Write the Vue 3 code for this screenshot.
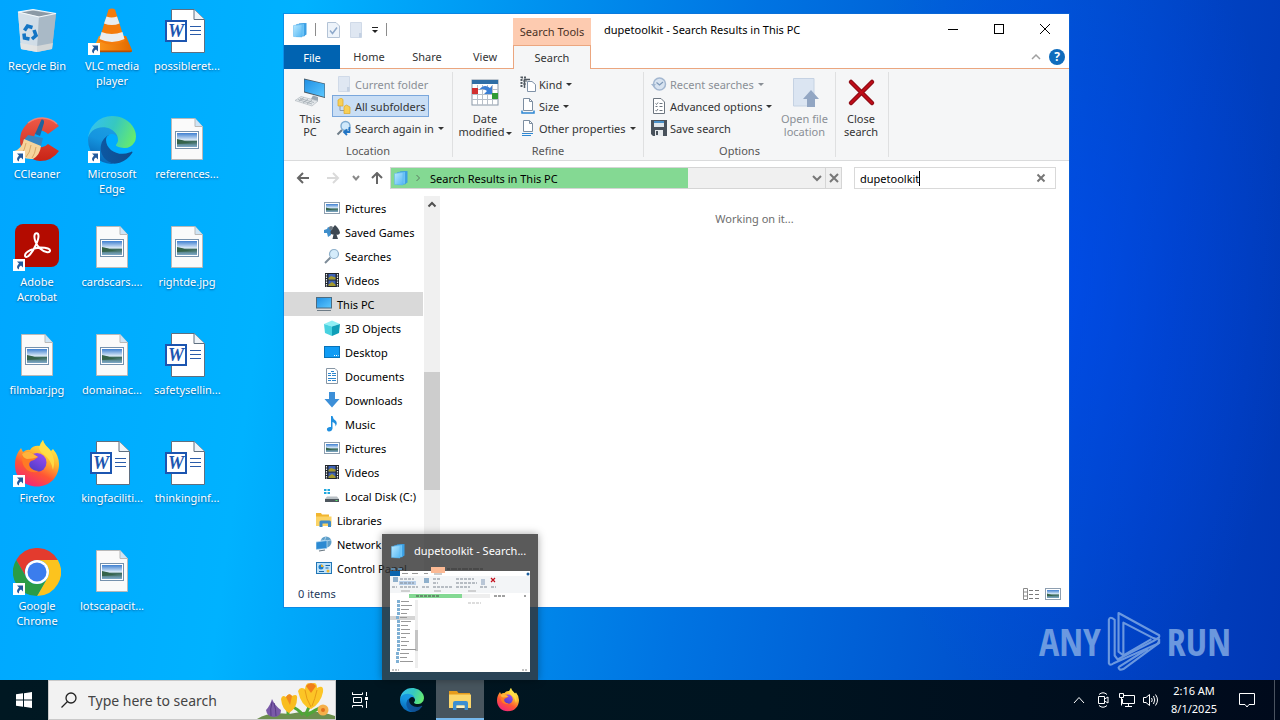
<template>
  <div class="screen">
    <!-- Icon sprite -->
    <svg class="sprite" aria-hidden="true">
      <defs>
        <linearGradient id="g-sky" x1="0" y1="0" x2="0" y2="1">
          <stop offset="0" stop-color="#3f7fd0" />
          <stop offset="0.5" stop-color="#dcebf8" />
          <stop offset="0.6" stop-color="#3d6b5c" />
          <stop offset="1" stop-color="#7fa9c9" />
        </linearGradient>
        <linearGradient id="g-screen" x1="0" y1="0" x2="1" y2="1">
          <stop offset="0" stop-color="#1f8fe4" />
          <stop offset="1" stop-color="#5cc8ff" />
        </linearGradient>
        <linearGradient id="g-bin" x1="0" y1="0" x2="1" y2="0">
          <stop offset="0" stop-color="#dfe6ec" />
          <stop offset="1" stop-color="#9aaab8" />
        </linearGradient>
        <linearGradient id="g-cone" x1="0" y1="0" x2="1" y2="0">
          <stop offset="0" stop-color="#ff9a1e" />
          <stop offset="1" stop-color="#e26a00" />
        </linearGradient>
        <linearGradient id="g-edge-dark" x1="0" y1="0.5" x2="1" y2="0.5">
          <stop offset="0" stop-color="#0c59a4" />
          <stop offset="1" stop-color="#114a8b" />
        </linearGradient>
        <linearGradient id="g-edge-mid" x1="0.6" y1="0" x2="0.3" y2="1">
          <stop offset="0" stop-color="#1b9de2" />
          <stop offset="0.4" stop-color="#1595df" />
          <stop offset="1" stop-color="#0660b0" />
        </linearGradient>
        <linearGradient id="g-edge-top" x1="0" y1="0.3" x2="1" y2="0.6">
          <stop offset="0" stop-color="#35c1f1" />
          <stop offset="0.5" stop-color="#36c8c0" />
          <stop offset="1" stop-color="#66eb6e" />
        </linearGradient>
        <linearGradient id="g-fox" x1="0.8" y1="0.05" x2="0.3" y2="1">
          <stop offset="0" stop-color="#fff44f" />
          <stop offset="0.35" stop-color="#ffb52e" />
          <stop offset="0.65" stop-color="#ff5634" />
          <stop offset="1" stop-color="#f1257c" />
        </linearGradient>
        <linearGradient id="g-globe" x1="0.8" y1="0" x2="0.2" y2="1">
          <stop offset="0" stop-color="#9a4cf2" />
          <stop offset="1" stop-color="#4a3cc4" />
        </linearGradient>
        <linearGradient id="g-cc" x1="0" y1="0" x2="0" y2="1">
          <stop offset="0" stop-color="#ee5a48" />
          <stop offset="1" stop-color="#c92416" />
        </linearGradient>
        <linearGradient id="g-stack" x1="0" y1="0" x2="1" y2="1">
          <stop offset="0" stop-color="#b9e8ff" />
          <stop offset="1" stop-color="#55b8f4" />
        </linearGradient>
      </defs>

      <symbol id="recycle" viewBox="0 0 48 48">
        <path d="M5 4 20 1.500 43 5.500 39 41 24 44 8 41z" fill="url(#g-bin)" />
        <path d="M5 4 26 9 24 44 8 41z" fill="#d3dfe9" opacity="0.9" />
        <path d="M26 9 43 5.500 39 41 24 44z" fill="#a9b9c6" />
        <path d="M8 4.500 20 2.500 40 6 26 8.500z" fill="#8b99a5" />
        <path d="M5 4 20 1.500 43 5.500 26 9z" fill="none" stroke="#f4f8fb" stroke-width="1.200" />
        <path d="M7 35 24 38 40 35 39 41 24 44 8 41z" fill="#efe9e2" opacity="0.6" />
        <g fill="none" stroke="#1475c4" stroke-width="3.600">
          <path d="M11.500 22.500 14.500 18 19.500 19.500" />
          <path d="M21 22 23 27.500 19 31" />
          <path d="M16.500 31 11.500 30 11 25.500" />
        </g>
      </symbol>

      <symbol id="vlc" viewBox="0 0 48 48">
        <path d="M11 28h27l6 14q.5 2-1.500 2H6.500q-2 0-1.500-2z" fill="url(#g-cone)" />
        <path d="M5 42.500h39q0 1.800-1.500 1.800H6.500Q5 44.300 5 42.500z" fill="#b95000" />
        <path d="M20.500 1.500q3.500-2 6.500 0L37 33q-12.500 7-26 0z" fill="#f47c0c" />
        <path d="M18.500 8.500q5 2 10.500 0l2.500 7q-7.500 3-15.500 0z" fill="#e9edf0" />
        <path d="M13.500 24q10 4 21 0l2 7q-12.500 6-25 0z" fill="#e9edf0" />
      </symbol>

      <symbol id="ccleaner" viewBox="0 0 48 48">
        <path d="M46 10A21 21 0 0 0 13 9A22 22 0 0 0 12 38Q20 45 27 45Q39 45 46 35L35 28Q30 33 25 30Q19 25 22 18Q27 11 35 18z" fill="url(#g-cc)" />
        <path d="M44 8A22 22 0 0 0 15 7" fill="none" stroke="#ff9a8a" stroke-width="1.500" opacity="0.6" />
        <path d="M28.500 3.500Q31.500 3 31 7L27 20 22 18z" fill="#21639c" />
        <path d="M15 19 30 22 28 30 10 25z" fill="#3886c0" />
        <path d="M11 23 28 30Q27 39 20 43Q9 44 1 35Q9 33 11 23z" fill="#f6d59c" />
        <path d="M13 27Q12 34 8 38M18 29Q17 37 13 41M23 31Q22 38 19 42" fill="none" stroke="#d9a866" stroke-width="1" />
      </symbol>

      <symbol id="edge" viewBox="0 0 256 256">
        <path fill="url(#g-edge-dark)" d="M231 190.500c-3.400 1.800-6.900 3.400-10.500 4.700a101.900 101.900 0 0 1-35.900 6.500c-47.300 0-88.500-32.500-88.500-74.300a31.500 31.500 0 0 1 16.400-27.300c-42.800 1.800-53.800 46.400-53.800 72.500 0 74 68.100 81.400 82.800 81.400 7.900 0 19.800-2.300 27-4.600l1.300-.4a128.300 128.300 0 0 0 66.600-52.800 4 4 0 0 0-5.400-5.700z" />
        <path fill="url(#g-edge-mid)" d="M105.700 241.400a79.200 79.200 0 0 1-22.700-21.300 80.700 80.700 0 0 1 29.500-120c3.200-1.500 8.500-4.100 15.600-4a32.400 32.400 0 0 1 25.700 13 31.900 31.900 0 0 1 6.300 18.700c0-.2 24.500-79.600-80-79.600-43.900 0-80 41.600-80 78.200a130.200 130.200 0 0 0 12.100 56 128 128 0 0 0 156.400 67 75.500 75.500 0 0 1-62.800-8z" />
        <path fill="url(#g-edge-top)" d="M152.300 148.900c-.9 1-3.400 2.500-3.400 5.600 0 2.600 1.700 5.200 4.800 7.300 14.300 10 41.400 8.600 41.500 8.600a59.600 59.600 0 0 0 30.300-8.300 61.400 61.400 0 0 0 30.400-52.900c.3-22.400-8-37.300-11.300-43.900C223.500 23.900 177.700 0 128 0A128 128 0 0 0 0 126.200c.5-36.500 36.800-66 80-66 3.500 0 23.500.3 42 10 16.300 8.600 24.900 19 30.800 29.200 6.200 10.700 7.300 24.100 7.300 29.500 0 5.300-2.700 13.300-7.800 19.900z" />
      </symbol>

      <symbol id="acrobat" viewBox="0 0 48 48">
        <rect x="2" y="0" width="44" height="43" rx="8" fill="#b30b00" />
        <path d="M12 31.500C12 28 21 23.500 27.500 23.500C34 23.500 37.500 25 37 27C36.500 29 31.500 28.500 27 24.500C23 21 21 14.500 21.500 11.500C22 8.500 25.500 8.500 25.500 12C25.500 16.500 21 26 17 30.500C14 34 12 33.500 12 31.500z" fill="none" stroke="#fff" stroke-width="2" />
      </symbol>

      <symbol id="firefox" viewBox="0 0 48 48">
        <path d="M30 0C31 5 35 7 38 11L40 9Q46 16 46 24C46 37 37 46.500 24 46.500C11 46.500 2 37 2 25C2 18 4 13 8 8L10 12Q14 9 17 10Q20 5 27 6Q28 3 30 0z" fill="url(#g-fox)" />
        <path d="M30 0C31 5 35 7 38 12Q43 20 40 30Q38 19 30 14Q26 11 26 7Q27 3 30 0z" fill="#ffe14a" opacity="0.8" />
        <circle cx="24" cy="22.500" r="9.500" fill="url(#g-globe)" />
        <path d="M9 14Q13 11 17 12L25 17Q22 20 18 21Q15 23 17 27Q20 31 26 31Q21 34 14 30Q8 25 9 14z" fill="#ff7a25" />
        <path d="M9 14Q13 11 17 12L25 17Q20 19 14 19Q10 18 9 14z" fill="#ffb43c" />
      </symbol>

      <symbol id="chrome" viewBox="0 0 48 48">
        <path d="M24 12h20.800A24 24 0 0 0 3.200 12L13.600 30A12 12 0 0 1 24 12z" fill="#e33b2e" />
        <path d="M34.400 30 24 48A24 24 0 0 0 44.800 12H24A12 12 0 0 1 34.400 30z" fill="#fcc31e" />
        <path d="M13.600 30 3.200 12A24 24 0 0 0 24 48L34.400 30A12 12 0 0 1 13.600 30z" fill="#2a9c46" />
        <circle cx="24" cy="24" r="12" fill="#fff" />
        <circle cx="24" cy="24" r="9.500" fill="#3b7ded" />
      </symbol>

      <symbol id="word" viewBox="0 0 48 48">
        <path d="M8.500 1.500H31L41.500 11.500V44.500H8.500z" fill="#fff" stroke="#5f6f80" />
        <path d="M31 1.500V11.500H41.500" fill="#eef3f8" stroke="#5f6f80" />
        <path d="M27 18.500h11M27 22.500h11M27 26.500h11" stroke="#2a5caa" stroke-width="1" />
        <rect x="3" y="13" width="20" height="20" fill="#fff" stroke="#1c55b0" stroke-width="2" />
      </symbol>

      <symbol id="photo" viewBox="0 0 48 48">
        <path d="M8.500 2.500H32L39.500 10.500V43.500H8.500z" fill="#fafafa" stroke="#b9b9b9" />
        <path d="M32 2.500V10.500H39.500" fill="#cfe4f5" stroke="#b9b9b9" />
        <rect x="12.500" y="15.500" width="23" height="17" fill="#fff" stroke="#7591ad" />
        <rect x="14" y="17" width="20" height="14" fill="url(#g-sky)" />
        <path d="M14 23q6 1 10 3 5 1 10 1l-20 1z" fill="#35634a" />
      </symbol>

      <symbol id="shortcut" viewBox="0 0 12 12">
        <rect width="12" height="12" fill="#fff" />
        <path d="M4 2.500h6v6L8 6.500Q5.500 7.500 6 10.500Q2 8.500 6 4.500z" fill="#235a9c" />
      </symbol>

      <symbol id="stack" viewBox="0 0 16 16">
        <path d="M7 1.500 14.500 1V12.500L12 14H7z" fill="#3b9fe4" />
        <path d="M4.500 2.500 12.500 1.500V14L4.500 14.500z" fill="#6cc3f7" stroke="#2f93d8" stroke-width="0.500" />
        <path d="M1.500 3.500 10 2.500V15L1.500 14.500z" fill="url(#g-stack)" stroke="#58b4ee" stroke-width="0.500" />
      </symbol>

      <symbol id="qa-check" viewBox="0 0 16 16">
        <path d="M2.500 .5H11L14.500 4V15.500H2.500z" fill="#edf3fa" stroke="#b3c3d6" />
        <path d="M5 8.500 7.500 11.500 12 5.500" fill="none" stroke="#8ea9cb" stroke-width="1.500" />
      </symbol>
      <symbol id="page-off" viewBox="0 0 16 16">
        <path d="M2.500 .5H13.500V15.500H2.500z" fill="#dfe7f2" stroke="#d0dae8" />
        <path d="M11 11v4.500h2.500V11z" fill="#c3d0e2" />
      </symbol>

      <symbol id="pc-large" viewBox="0 0 32 32">
        <path d="M10 1.500 31 6.500V21L10 15.500z" fill="#4b5862" />
        <path d="M10.500 2.500 30.500 7V20L10.500 14.500z" fill="url(#g-screen)" />
        <path d="M19 18.500 24 20V24L17 22z" fill="#9ba8b3" />
        <path d="M7 19.500 24 24 18 29 1 23.500z" fill="#e3e7ea" stroke="#aab2b9" stroke-width="0.600" />
        <path d="M6 21.500 20 25.500M4 22.500 18 27M10 20.500 5 24M14 22 9 26M18 23 13 27" stroke="#9aa3ab" stroke-width="0.700" />
      </symbol>
      <symbol id="subfolders" viewBox="0 0 16 16">
        <path d="M2 2 5 0 7 1.500V8H2z" fill="#f7cf57" stroke="#dca827" stroke-width="0.700" />
        <path d="M4 8v4.500H8" fill="none" stroke="#8e9aa8" />
        <path d="M8 8.500 10.500 7 14 9V15.500H8z" fill="#f7cf57" stroke="#dca827" stroke-width="0.700" />
      </symbol>
      <symbol id="search-again" viewBox="0 0 16 16">
        <circle cx="9.500" cy="6" r="4.500" fill="#cfe9fb" stroke="#7ba9cf" stroke-width="1.400" />
        <path d="M6 10 1.500 14.500" stroke="#6e7c88" stroke-width="2" />
        <path d="M13.500 7v5H8.500M11 9.500 8 12 11 15" fill="none" stroke="#2275c4" stroke-width="1.800" />
      </symbol>
      <symbol id="calendar" viewBox="0 0 32 32">
        <rect x="3" y="3" width="26" height="25" fill="#fff" stroke="#8a98a8" />
        <rect x="3" y="3" width="26" height="4" fill="#2f6ea5" />
        <path d="M8.500 8v20M13.500 8v20M18.500 8v20M23.500 8v20M3 12.500h26M3 17.500h26M3 22.500h26" stroke="#b7bfc8" stroke-width="1" />
        <rect x="3" y="11" width="6" height="6" fill="#d12f2f" />
        <rect x="23" y="16" width="6" height="6" fill="#2f9b35" />
        <path d="M10 13Q15 6 21 11L23 8.500V17H15L18 14Q14 10.500 10 13z" fill="#3b7fd4" />
      </symbol>
      <symbol id="kind" viewBox="0 0 16 16">
        <path d="M1.500 11V1.500H7" fill="none" stroke="#525a62" stroke-width="2" stroke-dasharray="2 1" />
        <path d="M4.500 12V3.500H10" fill="none" stroke="#525a62" stroke-width="1.500" />
        <path d="M7.500 5.500H12L15.500 8.500V15.500H7.500z" fill="#fff" stroke="#8092a8" />
        <path d="M3 5h4M3 8h3" stroke="#525a62" />
      </symbol>
      <symbol id="size" viewBox="0 0 16 16">
        <path d="M3.500 .5H9.500L12.500 3.500V12.500H3.500z" fill="#fff" stroke="#7d8ea1" />
        <path d="M9.500 .5V3.500H12.500" fill="none" stroke="#7d8ea1" />
        <path d="M2 12.500V15H14V12.500" fill="none" stroke="#2d87d3" stroke-width="1.500" />
      </symbol>
      <symbol id="props" viewBox="0 0 16 16">
        <path d="M3.500 .5H9.500L12.500 3.500V11.500H3.500z" fill="#fff" stroke="#7d8ea1" />
        <path d="M9.500 .5V3.500H12.500" fill="none" stroke="#7d8ea1" />
        <path d="M2 13.500H13M2 15.500H11" stroke="#2d87d3" />
      </symbol>
      <symbol id="recent" viewBox="0 0 16 16">
        <circle cx="8.500" cy="8" r="6" fill="#d8e3f0" stroke="#a3b7d0" stroke-width="1.500" />
        <path d="M5.500 6.500 8.500 9 12 6" fill="none" stroke="#7f99b8" stroke-width="1.200" />
        <path d="M0 8H5L2.500 11z" fill="#a3b7d0" />
      </symbol>
      <symbol id="advanced" viewBox="0 0 16 16">
        <path d="M2.500 .5H10L13.500 4V15.500H2.500z" fill="#fff" stroke="#6d7680" />
        <path d="M4.500 5.500 5.500 6.500 7 4.500M4.500 8.500h2M4.500 12.500 5.500 13 7 11M8.500 5.500h3M8.500 8.500h3M8.500 12.500h3" fill="none" stroke="#6d7680" />
      </symbol>
      <symbol id="save" viewBox="0 0 16 16">
        <path d="M0 0H16V16H2L0 14z" fill="#49525c" />
        <path d="M3 1H13V7H3z" fill="#dfe6ec" />
        <path d="M3 1H13V3H3z" fill="#4a90c8" />
        <path d="M4 10H12V16H4z" fill="#e7ebee" />
        <path d="M5 11h2v4H5z" fill="#49525c" />
      </symbol>
      <symbol id="open-file" viewBox="0 0 32 32">
        <path d="M5.500 1.500H26V29H5.500z" fill="#dbe5f2" stroke="#c5d2e3" />
        <path d="M19 30V22H15L23 13 31 22H27V30z" fill="#92a6c3" />
      </symbol>
      <symbol id="close-search" viewBox="0 0 32 32">
        <path d="M6 5 27 26M27 5 6 26" stroke="#8f0d16" stroke-width="4.500" stroke-linecap="round" />
        <path d="M6 5 27 26M27 5 6 26" stroke="#c00c18" stroke-width="2" stroke-linecap="round" />
      </symbol>

      <symbol id="pictures" viewBox="0 0 16 16">
        <rect x=".5" y="2.500" width="15" height="11" fill="#fff" stroke="#8e9fb0" />
        <rect x="2" y="4" width="12" height="8" fill="url(#g-sky)" />
        <path d="M2 7.500 8 9.500 14 10H2z" fill="#35634a" />
      </symbol>
      <symbol id="games" viewBox="0 0 16 16">
        <path d="M0 6 3 5 4 3 7 4V11L4 13 3 9H0z" fill="#3f8ecb" />
        <path d="M11 1Q15.500 5 16 9Q15 11.500 12.500 10.500L14 15H8.500L9.500 10.500Q6 11 6.500 7.500Q8 4 11 1z" fill="#3e4852" />
        <circle cx="7" cy="4" r="2" fill="#6d7780" />
      </symbol>
      <symbol id="searches" viewBox="0 0 16 16">
        <path d="M6.500 9.500 1 15" stroke="#7d8b98" stroke-width="2" />
        <circle cx="10" cy="6" r="4.500" fill="#d5ecfb" stroke="#8eb0cb" stroke-width="1.200" />
      </symbol>
      <symbol id="videos" viewBox="0 0 16 16">
        <rect x="1" y="1" width="14" height="14" fill="#20252b" />
        <path d="M2.500 2v13M13.500 2v13" stroke="#e8ecef" stroke-width="1.200" stroke-dasharray="1.500 1" />
        <path d="M4.500 2h7v5.500h-7zM4.500 8.500h7V14h-7z" fill="#3f62b4" />
        <path d="M4.500 6 7 4 11.500 5.500v2h-7zM4.500 12.500 8 10l3.500 2.500V14h-7z" fill="#a59a2c" />
      </symbol>
      <symbol id="this-pc" viewBox="0 0 16 16">
        <rect x=".5" y="1.500" width="15" height="10.500" fill="url(#g-screen)" stroke="#4c6b80" />
        <path d="M1 14.500H15" stroke="#6d7b86" stroke-width="1" />
      </symbol>
      <symbol id="objects" viewBox="0 0 16 16">
        <path d="M0 4 8 .5 16 4 8 6.500z" fill="#8ff0f5" />
        <path d="M0 4 8 6.500V16L1 13z" fill="#48d2e0" />
        <path d="M16 4 8 6.500V16L15 13z" fill="#0f9fb8" />
      </symbol>
      <symbol id="desktop" viewBox="0 0 16 16">
        <rect x=".5" y="2.500" width="15" height="11" fill="#109cf5" stroke="#0872b8" />
        <path d="M10 11.500h1M12 11.500h1M14 11.500h.5" stroke="#fff" />
      </symbol>
      <symbol id="documents" viewBox="0 0 16 16">
        <path d="M2.500 .5H11L13.500 3V15.500H2.500z" fill="#fff" stroke="#8796a5" />
        <path d="M7 3.500h3M4 5.500h3M8 5.500h4M4 7.500h3M8 7.500h4M4 10.500h8M4 12.500h3M8 12.500h4" stroke="#2e86cc" />
      </symbol>
      <symbol id="downloads" viewBox="0 0 16 16">
        <path d="M5 0H11V7H15.500L8 15.500.5 7H5z" fill="#3c8fd8" />
      </symbol>
      <symbol id="music" viewBox="0 0 16 16">
        <path d="M7 0H8.500Q9 3 11.500 4.500Q14 7 11.500 10.500Q12 7 8.500 6V12.500Q8 15.500 5 15.500Q2.500 15 3 12.500Q4 10.500 7 11z" fill="#1f8fe0" />
      </symbol>
      <symbol id="disk" viewBox="0 0 16 16">
        <path d="M0 1h2.500v2H0zM3.500 1H6v2H3.500zM0 4h2.500v2H0zM3.500 4H6v2H3.500z" fill="#1ea7dd" />
        <path d="M3 8.500H13L15 11H1z" fill="#b9c0c5" />
        <path d="M1 11H15V14H1z" fill="#4e575e" />
        <path d="M11.500 12.500h2" stroke="#58e36c" />
      </symbol>
      <symbol id="libraries" viewBox="0 0 16 16">
        <path d="M0 1H5L6 2.500H13V14H0z" fill="#f2b630" />
        <path d="M0 4.500H15.500V14H0z" fill="#fbd365" />
        <path d="M3.500 15V10Q3.500 8.500 5 8.500H13.500Q15 8.500 15 10V15H12V11.500H6.500V15z" fill="#3e8bc8" />
      </symbol>
      <symbol id="network" viewBox="0 0 16 16">
        <circle cx="10" cy="6" r="5.500" fill="#5f9fc9" />
        <path d="M10 .5Q7 5 9 11M5 4Q10 6 15 4" fill="none" stroke="#b9dcf2" stroke-width="0.800" />
        <path d="M0 6 11 4.500V12.500L0 13.500z" fill="#2c8ad2" stroke="#bfe1f6" stroke-width="0.700" />
        <path d="M3 15 9 14" stroke="#687681" stroke-width="1.200" />
      </symbol>
      <symbol id="control-panel" viewBox="0 0 16 16">
        <rect x=".5" y="2.500" width="15" height="11" fill="#bfe3fa" stroke="#2276b5" />
        <circle cx="5" cy="7" r="2.500" fill="#1f7fcb" />
        <path d="M5 7V4.500A2.500 2.500 0 0 1 7.500 7z" fill="#f0b42c" />
        <path d="M9.500 5.500H14M9.500 8h3M3 11.500H8" stroke="#1c66a4" />
        <circle cx="12" cy="11" r="1.500" fill="#f0b42c" />
      </symbol>

      <symbol id="explorer" viewBox="0 0 24 24">
        <path d="M1 3H9L10.500 5H22V10H1z" fill="#e59b1c" />
        <path d="M1 6.500H23V20H1z" fill="#fbd66b" />
        <path d="M5 22V15Q5 13 7 13H18Q20 13 20 15V22H16.500V17.500H8.500V22z" fill="#3c8fd2" />
        <path d="M8.500 17.500H16.500V20H8.500z" fill="#fff2c0" />
      </symbol>
    </svg>

    <main class="desktop">
      <div class="icons">
        <button v-for="item in shortcuts" :key="item.label" class="shortcut">
          <span class="shortcut-art">
            <svg class="art"><use :href="'#' + item.icon" /></svg>
            <b v-if="item.icon === 'word'" class="word-mark">W</b>
            <svg v-if="item.link" class="arrow"><use href="#shortcut" /></svg>
          </span>
          <span class="shortcut-label">{{ item.label }}</span>
        </button>
      </div>

      <!-- Explorer window -->
      <section class="window">
        <header class="titlebar">
          <div class="quick">
            <svg class="i16"><use href="#stack" /></svg>
            <i class="bar"></i>
            <svg class="i16"><use href="#qa-check" /></svg>
            <svg class="i16"><use href="#page-off" /></svg>
            <svg class="more" viewBox="0 0 8 8"><path d="M1 1.500H7" stroke="#222" /><path d="M1 4H7L4 7z" fill="#222" /></svg>
            <i class="bar"></i>
          </div>
          <div class="context-tab">Search Tools</div>
          <h1>dupetoolkit - Search Results in This PC</h1>
          <button class="ctl" aria-label="Minimize"><svg viewBox="0 0 10 10"><path d="M0 5.500H10" /></svg></button>
          <button class="ctl" aria-label="Maximize"><svg viewBox="0 0 10 10"><path d="M.5 .5H9.500V9.500H.5z" /></svg></button>
          <button class="ctl" aria-label="Close"><svg viewBox="0 0 10 10" class="smooth"><path d="M0 0 10 10M10 0 0 10" /></svg></button>
        </header>

        <nav class="tabs">
          <button class="tab file">File</button>
          <button class="tab">Home</button>
          <button class="tab">Share</button>
          <button class="tab">View</button>
          <button class="tab active">Search</button>
          <span class="tabs-end">
            <svg class="collapse" viewBox="0 0 10 10"><path d="M1 7 5 3 9 7" fill="none" stroke="#a0a0a0" stroke-width="1.500" /></svg>
            <button class="help" aria-label="Help">?</button>
          </span>
        </nav>

        <div class="ribbon">
          <div v-for="group in ribbon" :key="group.id" class="group" :class="group.id">
            <div class="group-body">
              <button v-if="group.lead" class="big">
                <svg><use :href="'#' + group.lead.icon" /></svg>
                <span>{{ group.lead.top }}<br />{{ group.lead.bottom }}<i v-if="group.lead.menu" class="caret-down"></i></span>
              </button>
              <div v-if="group.items" class="small-list">
                <button
                  v-for="item in group.items"
                  :key="item.label"
                  class="small"
                  :class="{ on: item.on, off: item.off }"
                >
                  <svg class="i16"><use :href="'#' + item.icon" /></svg>
                  <span>{{ item.label }}</span>
                  <i v-if="item.menu" class="caret-down"></i>
                </button>
              </div>
              <button v-if="group.tail" class="big off">
                <svg><use :href="'#' + group.tail.icon" /></svg>
                <span>{{ group.tail.top }}<br />{{ group.tail.bottom }}</span>
              </button>
            </div>
            <div class="group-name">{{ group.name }}</div>
          </div>
        </div>

        <div class="navbar">
          <button class="nav wide" aria-label="Back"><svg viewBox="0 0 14 12"><path d="M13 6H2M7 1 2 6 7 11" stroke="#666" /></svg></button>
          <button class="nav wide" aria-label="Forward"><svg viewBox="0 0 14 12"><path d="M1 6H12M7 1 12 6 7 11" stroke="#dadada" /></svg></button>
          <button class="nav recent" aria-label="Recent locations"><svg viewBox="0 0 14 12"><path d="M4 4 7 7.500 10 4" stroke="#8a8a8a" /></svg></button>
          <button class="nav up" aria-label="Up"><svg viewBox="0 0 14 12"><path d="M7 12V1M2 6 7 1 12 6" stroke="#666" /></svg></button>
          <div class="address" :style="{ '--done': progress + '%' }">
            <svg class="i16"><use href="#stack" /></svg>
            <svg class="crumb" viewBox="0 0 8 8"><path d="M2.500 1 5.500 4 2.500 7" /></svg>
            <span class="path">Search Results in This PC</span>
            <button class="addr-btn" aria-label="Previous locations"><svg viewBox="0 0 10 10"><path d="M1 3 5 7 9 3" /></svg></button>
            <button class="addr-btn stop" aria-label="Stop loading"><svg viewBox="0 0 10 10"><path d="M1 1 9 9M9 1 1 9" /></svg></button>
          </div>
          <div class="search">
            <input v-model="query" type="text" size="9" aria-label="Search This PC" />
            <i class="text-caret"></i>
            <button class="clear" aria-label="Clear"><svg viewBox="0 0 10 10"><path d="M1.500 1.500 8.500 8.500M8.500 1.500 1.500 8.500" /></svg></button>
          </div>
        </div>

        <div class="body">
          <nav class="tree">
            <a
              v-for="(node, i) in tree"
              :key="i"
              href="#"
              :class="{ deep: node.deep, selected: node.selected }"
            >
              <svg class="i16"><use :href="'#' + node.icon" /></svg>{{ node.label }}
            </a>
          </nav>
          <div class="scrollbar">
            <svg class="scroll-up" viewBox="0 0 16 17"><path d="M4.500 10.500 8 7 11.500 10.500" /></svg>
            <i class="before"></i>
            <i class="thumb"></i>
            <i class="after"></i>
          </div>
          <p class="content">Working on it...</p>
        </div>

        <footer class="status">
          <span>0 items</span>
          <svg class="view-mode" viewBox="0 0 16 12">
            <path d="M.5 .5h4v11h-4zM.5 4h4M.5 8h4" fill="none" stroke="#8a8a8a" />
            <path d="M6 2.500h4M12 2.500h4M6 6.500h4M12 6.500h4M6 10.500h4M12 10.500h4" stroke="#7a7a7a" />
          </svg>
          <svg class="i16"><use href="#pictures" /></svg>
        </footer>
      </section>

      <!-- Taskbar thumbnail -->
      <aside class="preview">
        <div class="preview-title">
          <svg class="i16"><use href="#stack" /></svg>
          <span>dupetoolkit - Search...</span>
        </div>
        <svg class="thumbnail" viewBox="0 0 140 105">
          <path d="M0 4H140V105H0z" fill="#fff" />
          <path d="M41 0H55V6H41z" fill="#fbb994" />
          <path d="M1 1H5V3H1zM8 1H12V3H8z" fill="#5d88a8" />
          <path d="M57 2H94" stroke="#222" stroke-dasharray="3 1 6 1" opacity="0.6" />
          <path d="M0 4H10V9H0z" fill="#0b64ad" />
          <path d="M12 6.500H18M22 6.500H28M34 6.500H38M44 7H52" stroke="#999" />
          <circle cx="138" cy="7" r="1.500" fill="#1c5d9c" />
          <path d="M0 9H140V26H0z" fill="#f3f5f7" />
          <path d="M9 14H26V18H9z" fill="#b9d0ea" />
          <path d="M3 10H8V15H3zM34 11H39V16H34z" fill="#8fb0cc" />
          <path d="M10 12H24M10 16H24M10 20H28M2 20H7M32 20H40M43 12H50M43 16H48M43 20H62M66 12H84M66 16H87M66 20H80M90 20H98M101 20H106" stroke="#7d8590" stroke-dasharray="3 1" />
          <path d="M91 12H95V18H91z" fill="#b9c6d6" />
          <path d="M101 11 105 15M105 11 101 15" stroke="#c40f1c" stroke-width="1.200" />
          <path d="M11 24H20M44 24H51M78 24H86" stroke="#aaa" />
          <path d="M19 27H72V31H19z" fill="#84d993" />
          <path d="M72 27H100V31H72z" fill="#eee" />
          <path d="M26 29H49M104 29H115M134 29H136" stroke="#444" stroke-dasharray="3 1" />
          <path d="M78 36H91" stroke="#bbb" stroke-dasharray="3 1" />
          <path d="M0 49H25V53H0z" fill="#d4d4d4" />
          <path d="M25 33H28V101H25z" fill="#eee" />
          <path d="M25 63H28V84H25z" fill="#c4c4c4" />
          <g v-for="(node, i) in tree" :key="i">
            <rect :x="node.deep ? 7 : 6" :y="33 + i * 4" width="3" height="3" fill="#7fb0d4" />
            <rect :x="node.deep ? 11 : 10" :y="34 + i * 4" :width="node.label.length" height="1" fill="#999" />
          </g>
          <path d="M2 103H9M132 103H138" stroke="#888" stroke-dasharray="2 1" />
        </svg>
      </aside>

      <div class="watermark">
        <span>ANY</span>
        <svg viewBox="0 0 60 62">
          <g fill="none" stroke="currentColor" stroke-width="2.200" stroke-linejoin="round">
            <path d="M10 9Q5 5 4 9V54Q5 57 9 54L54 34Q57 31 55 28L50 31 13 50 10 46z" />
            <path d="M14 2 56 25Q57 28 53 29L50 28 19 12V46L14 42z" />
            <path d="M19 46 48 29M14 58Q14 62 19 60L56 33V29M14 58 44 39" />
          </g>
        </svg>
        <span>RUN</span>
      </div>
    </main>

    <!-- Taskbar -->
    <footer class="taskbar">
      <button class="task" aria-label="Start">
        <svg viewBox="0 0 16 16" width="16" height="16"><path d="M0 2.300 7 1.300V7.500H0zM8 1.200 16 0V7.500H8zM0 8.500H7V14.700L0 13.700zM8 8.500H16V16L8 14.800z" fill="#fff" /></svg>
      </button>
      <label class="finder">
        <svg class="lens" viewBox="0 0 16 16"><circle cx="10" cy="6" r="5" /><path d="M6.500 9.500 .5 15.500" /></svg>
        <input type="text" placeholder="Type here to search" />
        <svg class="flowers" viewBox="0 0 80 38">
          <path d="M2 38Q14 30 34 33Q58 27 80 35V38z" fill="#6c8f4e" />
          <path d="M33 34V24M50 34Q54 28 56 18M48 34Q42 27 37 26M51 35Q61 28 68 26" fill="none" stroke="#4fa638" stroke-width="3" />
          <path d="M17 18Q15 25 11 29Q12 36 19 36Q26 36 26 29Q20 25 17 18z" fill="#7a5aa8" />
          <path d="M17 21Q15 28 16 35M19 22Q21 28 21 35" fill="none" stroke="#563a85" />
          <path d="M26 18Q27 13 31 16Q34 11 37 15Q43 12 42 18Q42 27 34 32Q27 28 26 18z" fill="#f9bd1e" />
          <path d="M31 16Q34 11 37 15L35 24z" fill="#f08a1c" />
          <path d="M43 10Q45 5 50 8Q51 0 56 3Q62 0 62 7Q69 3 68 11Q66 22 56 28Q46 25 43 10z" fill="#fcc526" />
          <path d="M51 5Q56 -1 61 5L56 12z" fill="#f07f1a" />
          <path d="M50 9Q51 18 56 26M62 9Q60 18 57 25" fill="none" stroke="#e79a16" />
          <circle cx="68" cy="29" r="5.500" fill="#f5b04a" />
          <circle cx="68" cy="29" r="2" fill="#e2711d" />
        </svg>
      </label>
      <button class="task view" aria-label="Task View">
        <svg viewBox="0 0 16 16" width="16" height="16"><g fill="none" stroke="#fff"><path d="M.5 3V.5M.5 .5V2.500H10.500V.5M.5 15.500V13.500H10.500V15.500M1.500 5.500H9.500V10.500H1.500zM14.500 0V4M14.500 9V16" /></g><path d="M13 5H16V8H13z" fill="#fff" /></svg>
      </button>
      <button class="task" aria-label="Microsoft Edge"><svg class="i24"><use href="#edge" /></svg></button>
      <button class="task running" aria-label="File Explorer"><svg class="i24"><use href="#explorer" /></svg></button>
      <button class="task" aria-label="Firefox"><svg class="i24"><use href="#firefox" /></svg></button>

      <div class="tray">
        <button aria-label="Show hidden icons"><svg viewBox="0 0 16 16"><path d="M3 11 8 5.500 13 11" /></svg></button>
        <button aria-label="Meet Now"><svg viewBox="0 0 16 16"><path d="M4 2.500Q8-1 12 2.500M4 13.500Q8 17 12 13.500M3.500 4.500H9.500V11.500H3.500zM9.500 7 13 5V11L9.500 9" /></svg></button>
        <button aria-label="Network"><svg viewBox="0 0 16 16"><path d="M4.500 3.500H15.500V11.500H3.500V7M.5 1.500H4.500V5.500H.5zM2.500 5.500V13.500M6 14.500H13M9.500 11.500V14.500" /></svg></button>
        <button aria-label="Volume"><svg viewBox="0 0 16 16"><path d="M.5 5.500H3L6.500 2.500V13.500L3 10.500H.5zM8.500 6Q10 8 8.500 10M10.500 4Q13 8 10.500 12M12.500 2.500Q16.500 8 12.500 13.500" /></svg></button>
        <time>2:16 AM<br />8/1/2025</time>
        <button class="notify" aria-label="Notifications"><svg viewBox="0 0 16 16"><path d="M.5 1.500H15.500V12.500H10L8 15 6 12.500H.5z" /></svg></button>
        <button class="peek" aria-label="Show desktop"></button>
      </div>
    </footer>
  </div>
</template>

<script setup>
import { ref } from "vue";

const query = ref("dupetoolkit");
const progress = ref(66);

// Listed column by column
const shortcuts = [
  { label: "Recycle Bin", icon: "recycle" },
  { label: "CCleaner", icon: "ccleaner", link: true },
  { label: "Adobe Acrobat", icon: "acrobat", link: true },
  { label: "filmbar.jpg", icon: "photo" },
  { label: "Firefox", icon: "firefox", link: true },
  { label: "Google Chrome", icon: "chrome", link: true },
  { label: "VLC media player", icon: "vlc", link: true },
  { label: "Microsoft Edge", icon: "edge", link: true },
  { label: "cardscars....", icon: "photo" },
  { label: "domainac...", icon: "photo" },
  { label: "kingfaciliti...", icon: "word" },
  { label: "lotscapacit...", icon: "photo" },
  { label: "possibleret...", icon: "word" },
  { label: "references...", icon: "photo" },
  { label: "rightde.jpg", icon: "photo" },
  { label: "safetysellin...", icon: "word" },
  { label: "thinkinginf...", icon: "word" },
];

const ribbon = [
  {
    id: "location",
    name: "Location",
    lead: { icon: "pc-large", top: "This", bottom: "PC" },
    items: [
      { label: "Current folder", icon: "page-off", off: true },
      { label: "All subfolders", icon: "subfolders", on: true },
      { label: "Search again in", icon: "search-again", menu: true },
    ],
  },
  {
    id: "refine",
    name: "Refine",
    lead: { icon: "calendar", top: "Date", bottom: "modified", menu: true },
    items: [
      { label: "Kind", icon: "kind", menu: true },
      { label: "Size", icon: "size", menu: true },
      { label: "Other properties", icon: "props", menu: true },
    ],
  },
  {
    id: "options",
    name: "Options",
    items: [
      { label: "Recent searches", icon: "recent", off: true, menu: true },
      { label: "Advanced options", icon: "advanced", menu: true },
      { label: "Save search", icon: "save" },
    ],
    tail: { icon: "open-file", top: "Open file", bottom: "location" },
  },
  {
    id: "close",
    name: "",
    lead: { icon: "close-search", top: "Close", bottom: "search" },
  },
];

const tree = [
  { label: "Pictures", icon: "pictures", deep: true },
  { label: "Saved Games", icon: "games", deep: true },
  { label: "Searches", icon: "searches", deep: true },
  { label: "Videos", icon: "videos", deep: true },
  { label: "This PC", icon: "this-pc", selected: true },
  { label: "3D Objects", icon: "objects", deep: true },
  { label: "Desktop", icon: "desktop", deep: true },
  { label: "Documents", icon: "documents", deep: true },
  { label: "Downloads", icon: "downloads", deep: true },
  { label: "Music", icon: "music", deep: true },
  { label: "Pictures", icon: "pictures", deep: true },
  { label: "Videos", icon: "videos", deep: true },
  { label: "Local Disk (C:)", icon: "disk", deep: true },
  { label: "Libraries", icon: "libraries" },
  { label: "Network", icon: "network" },
  { label: "Control Panel", icon: "control-panel" },
];
</script>

<style>
body {
  overflow: hidden;
}
</style>

<style scoped>
.screen {
  display: flex;
  flex-direction: column;
  min-height: 100vh;
  font-family: "Noto Sans", "Open Sans", sans-serif;
  font-size: 11px;
  color: #000;
  background:
    radial-gradient(ellipse 18% 60% at 83% 40%, rgba(0, 72, 255, 0.5), rgba(0, 72, 255, 0) 100%),
    linear-gradient(98deg, #00a6ff 0%, #00b2ff 22%, #0094f0 38%, #0074e2 55%, #0056d0 75%, #0042c2 88%, #0036b4 100%);
}

.sprite {
  position: absolute;
  width: 0;
  height: 0;
}

button,
input {
  padding: 0;
  border: 0;
  background: none;
  font: inherit;
  color: inherit;
}

.i16 {
  width: 16px;
  height: 16px;
  flex: none;
}

.i24 {
  width: 24px;
  height: 24px;
}

.desktop {
  position: relative;
  flex: 1;
}

/* Desktop shortcuts */
.icons {
  display: grid;
  grid-auto-flow: column;
  grid-template-rows: repeat(6, 108px);
  grid-auto-columns: 74px;
  column-gap: 1px;
  justify-content: start;
  padding-top: 8px;
}

.shortcut {
  display: flex;
  flex-direction: column;
  align-items: center;
  gap: 2px;
  color: #fff;
  line-height: 15px;
  text-shadow: 0 1px 2px rgba(0, 40, 90, 0.6);
}

.shortcut-art {
  position: relative;
  width: 48px;
  height: 48px;
}

.art {
  width: 48px;
  height: 48px;
}

.word-mark {
  position: absolute;
  top: 12px;
  left: 2px;
  width: 22px;
  color: #1c55b0;
  font-family: "Liberation Serif", serif;
  font-size: 18px;
  font-style: italic;
  line-height: 22px;
  text-align: center;
  text-shadow: none;
}

.arrow {
  position: absolute;
  left: 0;
  bottom: 1px;
  width: 12px;
  height: 12px;
}

.shortcut-label {
  max-width: 66px;
  text-align: center;
}

/* Window frame */
.window {
  position: absolute;
  top: 14px;
  right: 211px;
  bottom: 73px;
  left: 284px;
  display: flex;
  flex-direction: column;
  background: #fff;
  box-shadow: 0 0 0 1px rgba(20, 110, 210, 0.5);
}

.titlebar {
  display: flex;
  height: 31px;
  padding-right: 1px;
}

.quick {
  display: flex;
  align-items: center;
  gap: 7px;
  width: 221px;
  padding-left: 8px;
}

.bar {
  width: 1px;
  height: 13px;
  margin-right: 2px;
  background: #8c8c8c;
}

.more {
  width: 8px;
  height: 8px;
}

.context-tab {
  width: 78px;
  margin-top: 4px;
  background: #fdcbb0;
  color: #4a3226;
  line-height: 28px;
  text-align: center;
}

h1 {
  flex: 1;
  margin: 0;
  padding-left: 13px;
  font-size: 11px;
  font-weight: 400;
  line-height: 31px;
}

.ctl {
  width: 46px;
}

.ctl svg {
  width: 10px;
  height: 10px;
  fill: none;
  stroke: #000;
  shape-rendering: crispEdges;
}

.ctl .smooth {
  shape-rendering: auto;
}

.tabs {
  display: flex;
  height: 23px;
  border-bottom: 1px solid #eba67f;
  color: #333;
}

.tab {
  width: 58px;
}

.tab.file {
  width: 56px;
  height: 24px;
  background: #0063b1;
  color: #fff;
}

.tab.active {
  width: 78px;
  height: 24px;
  box-sizing: border-box;
  margin-left: -1px;
  border: 1px solid #eba67f;
  border-bottom: 0;
  background: #f5f6f7;
}

.tabs-end {
  display: flex;
  align-items: center;
  gap: 8px;
  margin-left: auto;
  padding-right: 4px;
}

.collapse {
  width: 10px;
  height: 10px;
}

.help {
  width: 16px;
  height: 16px;
  border-radius: 50%;
  background: #0f6cbd;
  color: #fff;
  font-size: 12px;
  font-weight: 700;
  line-height: 16px;
}

/* Ribbon */
.ribbon {
  display: flex;
  height: 85px;
  padding: 3px 0;
  border-bottom: 1px solid #dadbdc;
  background: #f5f6f7;
  color: #333;
}

.group {
  display: flex;
  flex-direction: column;
  box-sizing: border-box;
  padding-top: 1px;
  border-right: 1px solid #dfe0e1;
}

.group-body {
  display: flex;
  height: 66px;
}

.location {
  width: 169px;
}

.refine {
  width: 191px;
}

.options {
  width: 192px;
}

.close {
  width: 53px;
}

.group-name {
  margin-top: 3px;
  line-height: 18px;
  text-align: center;
  color: #555;
}

.big {
  display: flex;
  flex: none;
  flex-direction: column;
  align-items: center;
  gap: 3px;
  width: 42px;
  padding-top: 4px;
  line-height: 13px;
  white-space: nowrap;
}

.big svg {
  width: 32px;
  height: 32px;
}

.location .big {
  margin: 0 1px 0 5px;
}

.refine .big {
  width: 62px;
  margin-left: 1px;
}

.options .big {
  width: 56px;
  margin: 0 4px 0 auto;
}

.close .big {
  width: 50px;
}

.small-list {
  display: flex;
  flex-direction: column;
  align-items: flex-start;
}

.options .small-list {
  padding-left: 3px;
}

.small {
  display: flex;
  align-items: center;
  gap: 3px;
  height: 22px;
  padding: 0 3px;
  border: 1px solid transparent;
  white-space: nowrap;
}

.small.on {
  border-color: #7aa7dc;
  background: #c9def5;
}

.off {
  color: #8a8f96;
}

.caret-down {
  display: inline-block;
  margin-left: 1px;
  border: 3px solid transparent;
  border-top-color: currentColor;
  border-bottom: 0;
  vertical-align: middle;
}

/* Navigation row */
.navbar {
  display: flex;
  height: 22px;
  padding: 6px 13px 7px 4px;
}

.nav {
  display: grid;
  place-items: center;
}

.nav svg {
  width: 14px;
  height: 12px;
  fill: none;
  stroke-width: 2;
}

.wide {
  width: 30px;
}

.recent {
  width: 16px;
}

.up {
  width: 26px;
}

.address {
  display: flex;
  flex: 1;
  align-items: center;
  box-sizing: border-box;
  padding-left: 2px;
  border: 1px solid #d5d5d5;
  background: linear-gradient(#84d993, #84d993) 0 0 / var(--done) 100% no-repeat #f0f0f0;
  background-origin: border-box;
}

.crumb {
  width: 8px;
  height: 8px;
  margin: 0 8px 0 5px;
  fill: none;
  stroke: #5a7a60;
}

.path {
  flex: 1;
}

.addr-btn {
  display: grid;
  place-items: center;
  width: 16px;
  height: 20px;
}

.addr-btn svg,
.clear svg {
  width: 10px;
  height: 10px;
  fill: none;
  stroke: #777;
  stroke-width: 2;
}

.stop {
  border-left: 1px solid #d5d5d5;
}

.search {
  display: flex;
  align-items: center;
  box-sizing: border-box;
  width: 202px;
  margin-left: 12px;
  padding: 0 9px 0 5px;
  border: 1px solid #d9d9d9;
}

.search input {
  field-sizing: content;
  outline: 0;
}

.text-caret {
  width: 1px;
  height: 15px;
  background: #000;
}

.clear {
  display: grid;
  margin-left: auto;
}

/* Body */
.body {
  display: flex;
  flex: 1;
  min-height: 0;
}

.tree {
  width: 139px;
  margin-right: 1px;
  overflow: hidden;
}

.tree a {
  display: flex;
  align-items: center;
  gap: 5px;
  height: 24px;
  padding-left: 32px;
  color: #000;
  text-decoration: none;
  white-space: nowrap;
}

.tree a.deep {
  padding-left: 40px;
}

.tree a.selected {
  background: #d9d9d9;
}

.scrollbar {
  display: flex;
  flex-direction: column;
  width: 16px;
  background: #f0f0f0;
}

.scroll-up {
  width: 16px;
  height: 17px;
  fill: none;
  stroke: #505050;
  stroke-width: 2;
}

.before {
  flex: 159;
}

.thumb {
  flex: 118;
  background: #cdcdcd;
}

.after {
  flex: 90;
}

.content {
  flex: 1;
  margin: 0;
  padding-top: 15px;
  text-align: center;
  color: #6d6d6d;
}

.status {
  display: flex;
  align-items: center;
  gap: 6px;
  height: 27px;
  padding: 0 8px 0 14px;
  color: #1e395b;
}

.status span {
  flex: 1;
}

.view-mode {
  width: 16px;
  height: 12px;
}

/* Taskbar thumbnail */
.preview {
  position: absolute;
  left: 382px;
  bottom: 0;
  box-sizing: border-box;
  width: 156px;
  padding: 0 8px 8px;
  background: rgba(52, 52, 52, 0.81);
  box-shadow: 0 0 8px rgba(0, 0, 0, 0.35);
  color: #fff;
}

.preview-title {
  display: flex;
  align-items: center;
  gap: 8px;
  height: 33px;
  white-space: nowrap;
}

.thumbnail {
  display: block;
  width: 100%;
}

.watermark {
  position: absolute;
  right: 49px;
  bottom: 8px;
  display: flex;
  align-items: center;
  gap: 4px;
  color: #86aee6;
  font-family: "Liberation Sans Narrow", "Open Sans Condensed", "Liberation Sans", sans-serif;
  font-size: 38px;
  opacity: 0.8;
}

.watermark svg {
  width: 58px;
  height: 62px;
}

/* Taskbar */
.taskbar {
  display: flex;
  height: 40px;
  background: linear-gradient(90deg, #001822, #001420 60%, #000a1c);
  color: #fff;
}

.task {
  display: grid;
  place-items: center;
  width: 48px;
}

.task.view {
  margin-right: 4px;
}

.task.running {
  box-sizing: border-box;
  padding-top: 2px;
  border-bottom: 2px solid #76b9ed;
  background: #47555e;
}

.finder {
  display: flex;
  align-items: center;
  box-sizing: border-box;
  width: 288px;
  padding-left: 12px;
  border: 1px solid #c9c9c9;
  background: #f2f2f2;
}

.lens {
  width: 16px;
  height: 16px;
  fill: none;
  stroke: #222;
  stroke-width: 1.3;
}

.finder input {
  flex: 1;
  min-width: 0;
  padding-left: 11px;
  outline: 0;
  font-size: 14px;
}

.finder input::placeholder {
  color: #444;
}

.flowers {
  width: 80px;
  height: 38px;
}

.tray {
  display: flex;
  align-items: center;
  margin-left: auto;
}

.tray button {
  display: grid;
  place-items: center;
  width: 24px;
}

.tray svg {
  width: 16px;
  height: 16px;
  fill: none;
  stroke: #fff;
}

.tray time {
  width: 62px;
  line-height: 18px;
  text-align: center;
}

.tray .notify {
  width: 44px;
}

.tray .peek {
  width: 6px;
  height: 40px;
  margin-left: 5px;
  border-left: 1px solid #4a5360;
}
</style>
